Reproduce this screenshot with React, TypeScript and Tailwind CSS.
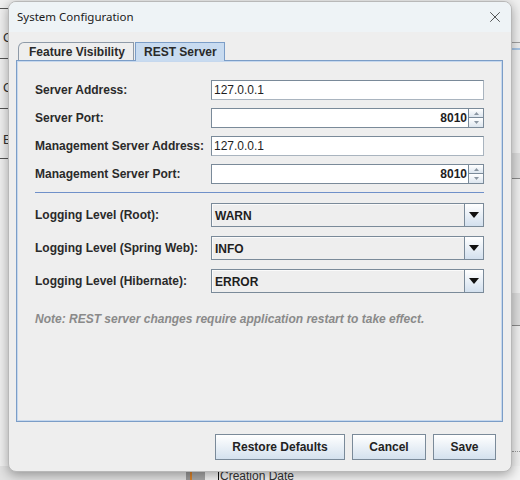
import { X } from 'lucide-react';

const font = "font-['Liberation_Sans',Arial,sans-serif]";
const label = `${font} font-bold text-[12px] text-[#2a2a2a] leading-[14px]`;

// Metal-style text field
const TextField = ({ value }: { value: string }) => (
  <div className={`h-[20px] bg-white border border-[#7a8a99] border-r-[#a9b4bf] border-b-[#a9b4bf] flex items-center px-[2px] ${font} text-[12px] text-[#1e1e1e]`}>
    {value}
  </div>
);

const Spinner = ({ value }: { value: string }) => (
  <div className="h-[20px] flex">
    <div className={`flex-1 bg-white border border-[#7a8a99] border-r-0 flex items-center justify-end pr-[1px] ${font} font-bold text-[12px] text-[#1e1e1e]`}>
      {value}
    </div>
    <div className="w-[16px] flex flex-col">
      <SpinButton up />
      <SpinButton />
    </div>
  </div>
);

const SpinButton = ({ up }: { up?: boolean }) => (
  <div className={`h-[10px] border border-[#7a8a99] ${up ? '' : 'border-t-0'} bg-gradient-to-b from-white to-[#dde6ef] flex items-center justify-center`}>
    <svg width="5" height="3" viewBox="0 0 5 3">
      {up ? <path d="M2.5 0 L5 3 L0 3 Z" fill="#8a96a2" /> : <path d="M0 0 L5 0 L2.5 3 Z" fill="#8a96a2" />}
    </svg>
  </div>
);

const Combo = ({ value }: { value: string }) => (
  <div className="h-[24px] flex border border-[#7a8a99]">
    <div className={`flex-1 bg-[#eeeeee] border border-[#fafafa] border-r-0 border-b-0 flex items-center px-[2px] ${font} font-bold text-[12px] text-[#1e1e1e]`}>
      {value}
    </div>
    <div className="w-[19px] border-l border-[#7a8a99] bg-gradient-to-b from-white to-[#d3e0ee] flex items-center justify-center">
      <svg width="10" height="6" viewBox="0 0 10 6">
        <path d="M0 0 L10 0 L5 6 Z" fill="#111" />
      </svg>
    </div>
  </div>
);

const Button = ({ children, w }: { children: string; w: string }) => (
  <button className={`${w} h-[26px] border border-[#7a8a99] bg-gradient-to-b from-white to-[#d4e1ee] ${font} font-bold text-[12px] text-[#222]`}>
    {children}
  </button>
);

// the main window peeking out from behind the dialog
const Backdrop = () => (
  <>
    <div className={`absolute left-0 top-[8px] w-[8px] flex flex-col ${font} text-[13px] text-[#333]`}>
      <div className="h-[50px] border-t border-[#555] pl-[3px] pt-[21px] leading-[15px]">G</div>
      <div className="h-[50px] border-t border-[#555] pl-[3px] pt-[21px] leading-[15px]">C</div>
      <div className="h-[51px] border-t border-b border-[#555] pl-[3px] pt-[23px] leading-[15px]">E</div>
    </div>
    <div className="absolute left-[512px] top-[42px] w-[8px] flex flex-col">
      <div className="h-[6px] border-t border-[#a0a0a0]" />
      <div className="h-[2px] bg-[#a9c6e6]" />
      <div className="h-[103px]" />
      <div className="h-[26px] bg-[#dedede] border-b border-[#8a8a8a]" />
      <div className="h-[114px]" />
      <div className="h-[33px] bg-[#dedede] border-b border-[#8a8a8a]" />
      <div className="h-[125px]" />
      <div className="h-[4px] border-t border-dotted border-[#999]" />
    </div>
    <div className="absolute left-0 top-[466px] w-[520px] h-[14px] flex">
      <div className="w-[186px] bg-[#e2e2e2]" />
      <div className="w-[4px] bg-[#9a9a9a]" />
      <div className="w-[2px] bg-[#d9822b]" />
      <div className="w-[13px] bg-[#a8a8a8]" />
      <div className="flex-1 bg-[#f4f4f4] pl-[13px] pt-[2px] flex">
        <div className="w-px h-[12px] bg-[#111]" />
        <span className={`pl-[1px] pt-[1px] ${font} text-[12px] leading-[14px] text-[#333]`}>Creation Date</span>
      </div>
    </div>
  </>
);

const rows = [
  { label: 'Server Address:', field: <TextField value="127.0.0.1" /> },
  { label: 'Server Port:', field: <Spinner value="8010" /> },
  { label: 'Management Server Address:', field: <TextField value="127.0.0.1" /> },
  { label: 'Management Server Port:', field: <Spinner value="8010" /> },
];

const logging = [
  { label: 'Logging Level (Root):', value: 'WARN' },
  { label: 'Logging Level (Spring Web):', value: 'INFO' },
  { label: 'Logging Level (Hibernate):', value: 'ERROR' },
];

export default function App() {
  return (
    <div className="relative w-[520px] h-[480px] bg-[#f0f0f0] overflow-hidden">
      <Backdrop />

      <div className="absolute left-[8px] top-[1px] w-[504px] h-[471px] rounded-[8px] border border-[#b8b8b8] bg-[#eeeeee] shadow-[0_3px_12px_rgba(0,0,0,0.35)] flex flex-col overflow-hidden">
        {/* title bar */}
        <div className="h-[30px] bg-[#eef3f6] flex items-center justify-between pl-[8px] pr-[7px]">
          <span className="font-['Noto_Sans',sans-serif] text-[11.5px] text-[#1a1a1a]">System Configuration</span>
          <X size={18} strokeWidth={1} className="text-[#222]" />
        </div>

        <div className="flex-1 flex flex-col pl-[7px] pr-[8px]">
          {/* tabs */}
          <div className="mt-[10px] pl-[2px] flex items-end">
            <div className={`w-[116px] h-[18px] rounded-tl-[6px] border border-b-0 border-[#8e9aa8] bg-[#eeeeee] flex items-center pl-[10px] ${label}`}>
              Feature Visibility
            </div>
            <div className={`relative z-10 -mb-px ml-px w-[90px] h-[19px] border border-b-0 border-[#7b9dc7] bg-[#c8dbf0] flex items-center pl-[8px] ${label}`}>
              REST Server
            </div>
          </div>

          {/* tab panel */}
          <div className="h-[362px] border border-[#7b9dc7] shadow-[inset_0_0_0_1px_#c6d8ee] px-[18px] pt-[19px]">
            <div className="grid grid-cols-[176px_273px] gap-y-[8px] items-center">
              {rows.map((r) => (
                <div key={r.label} className="contents">
                  <span className={label}>{r.label}</span>
                  {r.field}
                </div>
              ))}
            </div>

            <div className="mt-[8px] h-px bg-[#6f90c9]" />

            <div className="mt-[10px] grid grid-cols-[176px_273px] gap-y-[9px] items-center">
              {logging.map((l) => (
                <div key={l.label} className="contents">
                  <span className={label}>{l.label}</span>
                  <Combo value={l.value} />
                </div>
              ))}
            </div>

            <p className={`mt-[19px] ${font} font-bold italic text-[12px] leading-[14px] text-[#8a8a8a]`}>
              Note: REST server changes require application restart to take effect.
            </p>
          </div>

          {/* buttons */}
          <div className="mt-[12px] flex justify-end gap-[7px] pr-[7px]">
            <Button w="w-[130px]">Restore Defaults</Button>
            <Button w="w-[74px]">Cancel</Button>
            <Button w="w-[63px]">Save</Button>
          </div>
        </div>
      </div>
    </div>
  );
}
